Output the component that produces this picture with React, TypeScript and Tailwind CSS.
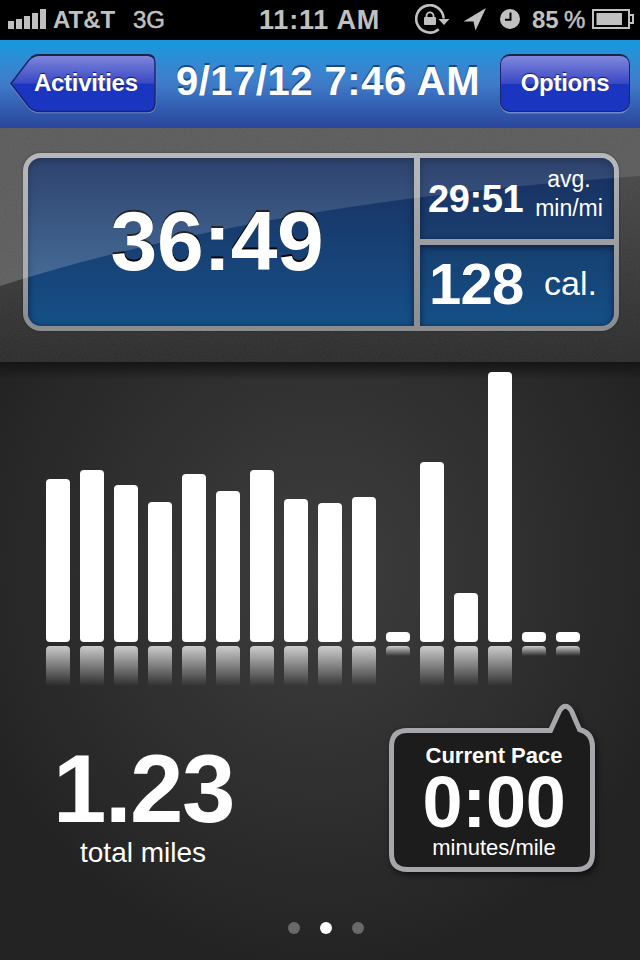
import React from 'react';

const bars = [163.3, 172, 156.7, 139.8, 168, 151, 172, 143.5, 139, 144.7, 10, 180.5, 49.5, 270, 10, 10];

function StatusBar() {
    return (
        <div className="flex h-10 items-center bg-black pl-2 text-[#c0c0c0] whitespace-nowrap">
            <div className="mb-0.5 flex h-5 w-[38px] items-end gap-0.5">
                <div className="h-2 w-1.5 bg-[#c0c0c0]" />
                <div className="h-2.5 w-1.5 bg-[#c0c0c0]" />
                <div className="h-[13px] w-1.5 bg-[#c0c0c0]" />
                <div className="h-4 w-1.5 bg-[#c0c0c0]" />
                <div className="h-5 w-1.5 bg-[#c0c0c0]" />
            </div>
            <div className="ml-[7px] w-[80px] text-2xl font-bold">AT&amp;T</div>
            <div className="w-[126px] text-2xl [-webkit-text-stroke:0.5px_#c0c0c0]">3G</div>
            <div className="w-[156px] text-[27px] font-bold tracking-[0.8px]">11:11 AM</div>
            <svg className="h-8 w-9 shrink-0" viewBox="0 0 36 32" fill="none">
                <path d="M23.800 25.300A13.7 13.7 0 1 1 28.600 14.500" stroke="#c0c0c0" strokeWidth="2.6" />
                <path d="M23.400 15h11L29 21z" fill="#c0c0c0" />
                <rect x="9" y="13" width="12" height="8" rx="1" fill="#c0c0c0" />
                <path d="M11.500 14V11.800a3.500 3.500 0 0 1 7 0v2.200" stroke="#c0c0c0" strokeWidth="1.8" />
            </svg>
            <svg className="ml-3 h-6 w-6 shrink-0" viewBox="0 0 24 24">
                <path d="M23 0 0.500 13.500H10.500l2 9z" fill="#c0c0c0" />
            </svg>
            <svg className="mb-0.5 ml-[13px] h-5 w-5 shrink-0" viewBox="0 0 20 20">
                <circle cx="10" cy="10" r="10" fill="#c0c0c0" />
                <path d="M10.500 3.500v7.300H5" fill="none" stroke="#000" strokeWidth="2" />
            </svg>
            <div className="ml-3 w-[32px] text-2xl font-bold">85</div>
            <div className="w-[28px] text-2xl [-webkit-text-stroke:0.5px_#c0c0c0]">%</div>
            <svg className="mb-0.5 h-5 w-[43px] shrink-0" viewBox="0 0 43 20">
                <rect x="1" y="1" width="36" height="18" fill="none" stroke="#c0c0c0" strokeWidth="2" />
                <rect x="4.500" y="4" width="25.500" height="12" fill="#c0c0c0" />
                <path d="M38 6h3v8h-3" fill="none" stroke="#c0c0c0" strokeWidth="2" />
            </svg>
        </div>
    );
}

function NavBar() {
    return (
        <div className="flex h-[88px] items-center bg-linear-to-b from-[#1897dc] from-5% via-[#3f7bc8] via-50% to-[#2a449c] px-2.5 pb-0.5 text-white whitespace-nowrap">
            <div className="relative h-[58px] w-[146px]">
                <svg className="absolute top-0 left-0" width="148" height="62" viewBox="0 0 148 62">
                    <defs>
                        <linearGradient id="button" x1="0" y1="0" x2="0" y2="1">
                            <stop offset="0" stopColor="#8088dc" />
                            <stop offset="0.5" stopColor="#3a48c4" />
                            <stop offset="0.51" stopColor="#1a35c0" />
                            <stop offset="1" stopColor="#1a35c0" />
                        </linearGradient>
                    </defs>
                    <path d="M1 31 19 7Q24 2 29 2H137Q145.500 2 145.500 10V50Q145.500 58.500 137 58.500H29Q24 58.500 19 54Z" fill="none" stroke="#7088c8" strokeWidth="1.500" />
                    <path d="M1 29.500 19 6Q24 1 29 1H137Q145 1 145 9V49Q145 57.500 137 57.500H29Q24 57.500 19 53Z" fill="url(#button)" stroke="#1b2470" strokeWidth="1.500" />
                    <path d="M21 3.500Q25 1 29 1H137Q142 1 144 4" fill="none" stroke="#1c2548" strokeWidth="1.800" />
                </svg>
                <div className="relative pl-6 text-2xl leading-[57px] font-bold tracking-[-0.3px] [text-shadow:0_-1px_1px_#101c60]">Activities</div>
            </div>
            <div className="ml-5 w-[324px] pb-[5px] text-[40px] leading-[50px] font-bold tracking-[0.5px] [text-shadow:0_-2px_0_#1d4880]">9/17/12 7:46 AM</div>
            <div className="h-[58px] w-[130px] shrink-0 rounded-[10px] border-[1.5px] border-t-2 border-[#1b2470] border-t-[#1c2548] bg-[linear-gradient(#8088dc,#3a48c4_50%,#1a35c0_51%)] text-center text-2xl leading-[54px] font-bold tracking-[-0.3px] shadow-[0_1.500px_0_#7088c8] [text-shadow:0_-1px_1px_#101c60]">Options</div>
        </div>
    );
}

function Summary() {
    return (
        <div className="relative h-[234px] bg-linear-to-b from-[#4e4e4e] to-[#2b2b2b] px-[23px] pt-[25px] text-white">
            <svg className="absolute inset-0 opacity-10" width="640" height="234">
                <filter id="grain">
                    <feTurbulence type="fractalNoise" baseFrequency="0.8" numOctaves="2" />
                </filter>
                <rect width="640" height="234" filter="url(#grain)" />
            </svg>
            <div className="relative grid h-[178px] w-[596px] grid-cols-[386px_194px] grid-rows-2 gap-1.5 rounded-[18px] bg-linear-to-b from-[#b0b1b4] to-[#8b8c90] p-[5px] shadow-[0_0_2px_#222]">
                <div className="row-span-2 flex items-center justify-center rounded-l-[13px] bg-linear-to-b from-[#182f5f] to-[#145087] pr-2 pb-[3px] text-[84px] leading-none font-bold tracking-[-0.4px] shadow-[inset_0_2px_7px_#0a2040]">
                    <div className="[text-shadow:0_-2px_0_#000]">36:49</div>
                </div>
                <div className="flex rounded-tr-[13px] bg-linear-to-b from-[#182f5f] to-[#193e6f] pl-2 shadow-[inset_0_2px_7px_#0a2040]">
                    <div className="w-[97px] pt-[22px] text-[38px] leading-none font-bold tracking-[-0.4px]">29:51</div>
                    <div className="w-[88px] pt-[7px] text-center text-[23px] leading-[29px]">
                        avg.
                        <br />
                        min/mi
                    </div>
                </div>
                <div className="flex rounded-br-[13px] bg-linear-to-b from-[#173f70] to-[#145087] pl-[9px] shadow-[inset_0_2px_7px_#0a2040]">
                    <div className="w-[115px] pt-[10px] text-[58px] leading-none font-bold tracking-[-0.8px]">128</div>
                    <div className="pt-[21px] text-[34px] leading-none">cal.</div>
                </div>
            </div>
            <svg className="pointer-events-none absolute inset-0" width="640" height="234">
                <defs>
                    <linearGradient id="gloss" x1="0" y1="0" x2="0" y2="1">
                        <stop offset="0" stopColor="#fff" stopOpacity="0.07" />
                        <stop offset="1" stopColor="#fff" stopOpacity="0.2" />
                    </linearGradient>
                </defs>
                <path d="M0 0H640V48Q261 74.500 0 158Z" fill="url(#gloss)" />
            </svg>
        </div>
    );
}

function Chart() {
    return (
        <div className="flex h-[324px] items-start gap-2.5 bg-linear-to-b from-[#151515] to-transparent to-[18px] pt-2.5 pl-[46px]">
            {bars.map((height, i) => (
                <div key={i} className="flex w-6 flex-col gap-1">
                    <div className="flex h-[270px] items-end">
                        <div className="w-full rounded bg-white" style={{ height }} />
                    </div>
                    <div
                        className="rounded-t bg-linear-to-b from-white/75 to-white/0"
                        style={{ height: Math.min(height, 40) }}
                    />
                </div>
            ))}
        </div>
    );
}

function Pace() {
    return (
        <div className="relative h-[170px] w-[208px] text-center text-white">
            <svg className="absolute inset-0 overflow-visible drop-shadow-[2px_3px_3px_#0009]" width="208" height="170">
                <path
                    d="M18.500 28.500H161.500L170.500 9Q176.500 -0.500 182.500 9L190.500 27.500Q203.500 31 203.500 44.500V151.500Q203.500 167.500 187.500 167.500H18.500Q2.500 167.500 2.500 151.500V44.500Q2.500 28.500 18.500 28.500Z"
                    fill="#1c1c1c"
                    stroke="#a6a7aa"
                    strokeWidth="5"
                />
            </svg>
            <div className="relative pt-[42px] pl-[2px]">
                <div className="text-[22px] leading-6 font-bold">Current Pace</div>
                <div className="text-[72px] leading-[68px] font-bold tracking-[-0.3px]">0:00</div>
                <div className="text-[22px] leading-6">minutes/mile</div>
            </div>
        </div>
    );
}

export default function App() {
    return (
        <div className="flex h-[960px] w-[640px] flex-col overflow-hidden bg-[#222] font-['Liberation_Sans',Arial,sans-serif]">
            <StatusBar />
            <NavBar />
            <Summary />
            <div className="h-[598px] bg-[radial-gradient(ellipse_370px_400px_at_50%_35%,#3e3e3e,#262626_90%,#232323)]">
                <Chart />
                <div className="flex h-[220px] pt-4 pl-[53px] text-white">
                    <div className="w-[336px] pt-[41px]">
                        <div className="text-[96px] leading-[91px] font-bold tracking-[-1.5px]">1.23</div>
                        <div className="pt-[3px] pl-[27px] text-[28px] leading-8">total miles</div>
                    </div>
                    <Pace />
                </div>
                <div className="flex justify-center gap-5 pt-4 pl-3">
                    <div className="h-3 w-3 rounded-full bg-[#696969]" />
                    <div className="h-3 w-3 rounded-full bg-white" />
                    <div className="h-3 w-3 rounded-full bg-[#696969]" />
                </div>
            </div>
        </div>
    );
}
